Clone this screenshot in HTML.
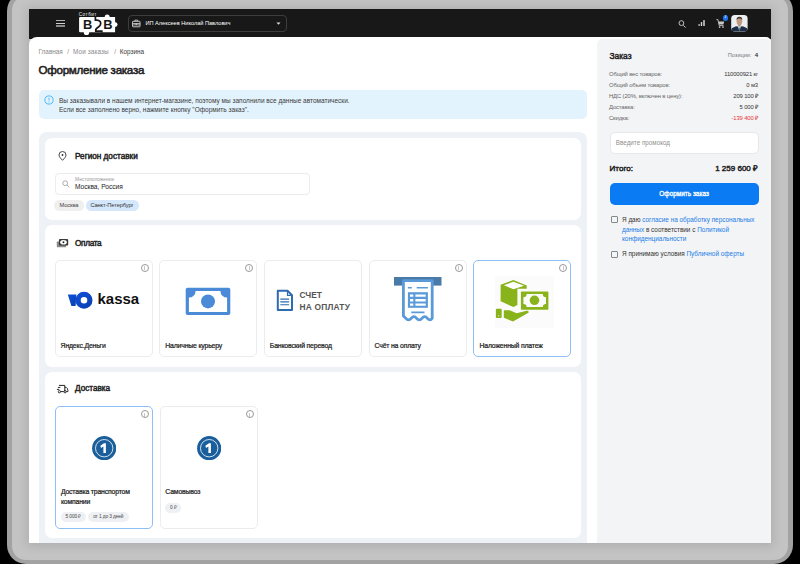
<!DOCTYPE html>
<html><head><meta charset="utf-8">
<style>
*{box-sizing:border-box;margin:0;padding:0}
html,body{width:800px;height:564px;overflow:hidden}
body{position:relative;background:#000;font-family:"Liberation Sans",sans-serif;color:#222}
.a{position:absolute}
.t{position:absolute;white-space:nowrap;line-height:1}
#ring{left:7px;top:-8px;width:786px;height:571.5px;border-radius:19px;background:#a2a2a2}
#gray{left:11.5px;top:-4px;width:776px;height:564px;border-radius:14px;background:#c3c3c3}
#shd{left:29px;top:9px;width:742px;height:534px;box-shadow:0 1px 9px 2px rgba(0,0,0,0.11)}
#hdr{left:29px;top:9px;width:742px;height:30px;background:#181818}
#main{left:29px;top:37.4px;width:742px;height:505.6px;background:#fff;border-radius:8px 5px 0 0}
#side{left:597px;top:38.9px;width:174px;height:504.1px;background:#f3f4f6;border-radius:5px 5px 0 0}
#panel{left:39px;top:132px;width:548px;height:411px;background:#eef1f5;border-radius:8px 8px 0 0}
.card{position:absolute;left:6px;width:536px;background:#fff;border-radius:7px}
.tile{position:absolute;width:98px;border:1px solid #ebecef;border-radius:5px;background:#fff}
.tile.sel{border-color:#8cc0f4}
.ii{position:absolute;right:3px;top:2.6px;width:8px;height:8px;border:0.9px solid #9a9a9a;border-radius:50%}.ii:after{content:"";position:absolute;left:2.65px;top:2.9px;width:0.85px;height:2.5px;background:#c4c4c4}.ii:before{content:"";position:absolute;left:2.65px;top:1.6px;width:0.85px;height:0.8px;background:#d0d0d0}
.med{color:#222;-webkit-text-stroke:0.45px #222}
.lbl{font-size:6.9px;font-weight:400;color:#222;letter-spacing:-0.18px;-webkit-text-stroke:0.22px #222}
.chip{position:absolute;height:10.5px;border-radius:5.25px;background:#eef0f3;font-size:5.7px;color:#444;line-height:10.5px;text-align:center;letter-spacing:-0.1px}
.row{position:absolute;left:12px;width:149px;font-size:5.9px;letter-spacing:-0.14px;color:#666;line-height:1}
.row span{position:absolute;right:0;top:0;color:#333}
</style></head><body>
<div class="a" id="ring"></div><div class="a" id="gray"></div><div class="a" id="shd"></div>
<div class="a" id="hdr"></div>
<div class="a" id="main"></div>
<div class="a" id="side"></div>

<!-- header content -->
<div class="a" style="left:56px;top:20px;width:9px;height:1.3px;background:#b0b0b0"></div>
<div class="a" style="left:56px;top:23px;width:9px;height:1px;background:#d0d0d0"></div>
<div class="a" style="left:56px;top:25.1px;width:9px;height:1.7px;background:#8a8a8a"></div>
<div class="t" style="left:78.8px;top:13.3px;font-size:4.6px;color:#eee;letter-spacing:0.5px">Сотбит</div>
<svg class="a" style="left:76px;top:9px" width="45" height="28" viewBox="0 0 45 28">
 <path d="M4.1 7.9H39.1V23.2H4.1A1 1 0 0 1 3.1 22.2V8.9A1 1 0 0 1 4.1 7.9Z" fill="#fff"/>
 <circle cx="10.5" cy="23.4" r="2.7" fill="#fff"/>
 <circle cx="31.2" cy="7.9" r="2.5" fill="#fff"/>
 <circle cx="39.1" cy="15.6" r="2.4" fill="#fff"/>
 <path d="M19.4 7.6V11H20.5C24 11 25.5 13.5 24.3 16C23.5 17.8 21 18.5 19.8 20.5V22H25.8V23.4" fill="none" stroke="#181818" stroke-width="1.75"/>
 <text x="7" y="20.3" font-family="Liberation Sans" font-weight="700" font-size="12.9" fill="#181818">B</text>
 <text x="27.3" y="20.3" font-family="Liberation Sans" font-weight="700" font-size="12.9" fill="#181818">B</text>
</svg>
<div class="a" style="left:128px;top:15px;width:159px;height:17px;border:1px solid #3d3d3d;border-radius:4px"></div>
<svg class="a" style="left:132px;top:19px" width="9" height="9" viewBox="0 0 9 9"><rect x="0.45" y="2.3" width="7.6" height="5.5" rx="0.5" fill="none" stroke="#d4d4d4" stroke-width="0.9"/><path d="M2.9 2.3V1.1H5.6V2.3M0.5 4.5H8M0.5 5.9H8" stroke="#d4d4d4" stroke-width="0.8" fill="none"/><rect x="3.6" y="4.4" width="1.3" height="1.5" fill="#d4d4d4"/></svg>
<div class="t" style="left:145.5px;top:20.5px;font-size:5.6px;color:#fff">ИП Алексеев Николай Павлович</div>
<svg class="a" style="left:276px;top:22px" width="5" height="3" viewBox="0 0 5 3"><path d="M0.5 0.5H4.5L2.5 2.8Z" fill="#ddd"/></svg>
<svg class="a" style="left:678.4px;top:19.6px" width="9" height="9" viewBox="0 0 9 9"><circle cx="3.4" cy="3.1" r="2.4" fill="none" stroke="#c8c8c8" stroke-width="0.95"/><path d="M5.3 5.3L7.6 7.6" stroke="#c8c8c8" stroke-width="1"/></svg>
<svg class="a" style="left:698px;top:20px" width="8" height="7" viewBox="0 0 8 7"><rect x="0.5" y="4" width="1.3" height="2.1" rx="0.5" fill="#c8c8c8"/><rect x="2.8" y="2.1" width="1.4" height="4" rx="0.5" fill="#d4d4d4"/><rect x="5.1" y="0" width="1.8" height="6.1" rx="0.5" fill="#b8b8b8"/></svg>
<svg class="a" style="left:715.5px;top:18.5px" width="10" height="10" viewBox="0 0 10 10"><path d="M0.4 0.6H1.9L3.2 6.6H7.6" fill="none" stroke="#c8c8c8" stroke-width="0.9"/><path d="M2.4 2.4H8.2L7.4 5.6H3.1Z" fill="#c8c8c8"/><circle cx="3.6" cy="8.1" r="0.85" fill="#c8c8c8"/><circle cx="7" cy="8.1" r="0.85" fill="#c8c8c8"/></svg>
<div class="a" style="left:722.7px;top:15px;width:5.6px;height:5.6px;border-radius:50%;background:#1c74ee"></div><div class="t" style="left:724.6px;top:16.3px;font-size:3px;color:#fff">4</div>
<svg class="a" style="left:731px;top:15px" width="17" height="16.5" viewBox="0 0 17 16.5">
 <defs><clipPath id="av"><rect x="0.2" y="0" width="16.4" height="16.4" rx="3.5"/></clipPath></defs>
 <g clip-path="url(#av)">
 <rect x="0" y="0" width="17" height="17" fill="#eceeef"/>
 <path d="M0 16.5V14.3C1.5 12.3 4 11.6 6 11.2L8.4 12.2L10.8 11.2C12.8 11.6 15.3 12.3 17 14.3V16.5Z" fill="#1c2d48"/>
 <path d="M7 11.2L8.4 16.5L9.8 11.2Z" fill="#e8ecee"/>
 <path d="M8.1 12.5H8.8L9 16.5H7.9Z" fill="#4d6b74"/>
 <ellipse cx="8.4" cy="6.2" rx="2.8" ry="3.9" fill="#c29a82"/>
 <path d="M5.6 5.5C5.3 2.6 6.6 1.7 8.4 1.7C10.3 1.7 11.5 2.6 11.2 5.5C10.8 3.8 10 3.4 8.4 3.4C6.8 3.4 6 3.8 5.6 5.5Z" fill="#3b302b"/>
 <rect x="7.2" y="9.5" width="2.4" height="2" fill="#b38d77"/>
 </g>
</svg>

<!-- main content -->
<div class="t" style="left:38.5px;top:49.3px;font-size:6.4px;color:#8a8a8a">Главная</div>
<div class="t" style="left:67.3px;top:49.3px;font-size:6.4px;color:#8a8a8a">/</div>
<div class="t" style="left:73px;top:49.3px;font-size:6.4px;color:#8a8a8a;letter-spacing:0.1px">Мои заказы</div>
<div class="t" style="left:114.2px;top:49.3px;font-size:6.4px;color:#8a8a8a">/</div>
<div class="t" style="left:119.7px;top:49.3px;font-size:6.4px;color:#3a3a3a">Корзина</div>
<div class="t med" style="left:38.5px;top:64.1px;font-size:11.6px;letter-spacing:-0.28px;-webkit-text-stroke:0.55px #222">Оформление заказа</div>

<div class="a" style="left:39px;top:90px;width:548px;height:29px;background:#e3f3fd;border-radius:5px"></div>
<svg class="a" style="left:43.8px;top:95.2px" width="10" height="10" viewBox="0 0 10 10"><circle cx="5" cy="5" r="4.1" fill="none" stroke="#38adf4" stroke-width="0.85"/><path d="M5 2.7V5.5" stroke="#38adf4" stroke-width="0.8"/><circle cx="5" cy="7" r="0.5" fill="#38adf4"/></svg>
<div class="t" style="left:59px;top:96.1px;font-size:6.5px;color:#3a3a3a;line-height:9px">Вы заказывали в нашем интернет-магазине, поэтому мы заполнили все данные автоматически.<br>Если все заполнено верно, нажмите кнопку "Оформить заказ".</div>

<div class="a" id="panel">
 <!-- region card -->
 <div class="card" style="top:6px;height:82px">
  <svg class="a" style="left:13px;top:13px" width="9" height="10" viewBox="0 0 9 10"><path d="M4.5 9.3C2.5 7.3 1 5.6 1 4A3.5 3.5 0 0 1 8 4C8 5.6 6.5 7.3 4.5 9.3Z" fill="none" stroke="#333" stroke-width="0.9"/><circle cx="4.5" cy="4" r="0.9" fill="#333"/></svg>
  <div class="t med" style="left:30px;top:14.6px;font-size:8.2px">Регион доставки</div>
  <div class="a" style="left:9.5px;top:35px;width:255px;height:21.5px;border:1px solid #ebeced;border-radius:4px"></div>
  <svg class="a" style="left:16.5px;top:41.5px" width="8" height="8" viewBox="0 0 8 8"><circle cx="3.2" cy="3.2" r="2.4" fill="none" stroke="#999" stroke-width="0.8"/><path d="M5 5L7.4 7.4" stroke="#999" stroke-width="0.8"/></svg>
  <div class="t" style="left:30px;top:39.6px;font-size:4.9px;color:#999">Местоположение</div>
  <div class="t" style="left:30px;top:45.5px;font-size:6.6px;color:#222">Москва, Россия</div>
  <div class="chip" style="left:9.2px;top:62px;width:29.6px;background:#efeff0">Москва</div>
  <div class="chip" style="left:40.5px;top:62px;width:53px;background:#d5e8fb;color:#333">Санкт-Петербург</div>
 </div>
 <!-- payment card -->
 <div class="card" style="top:92.5px;height:142.5px">
  <svg class="a" style="left:11px;top:13px" width="13" height="10" viewBox="0 0 13 10">
 <rect x="0.8" y="3.4" width="9.4" height="5.9" rx="0.9" fill="#8a8a8a"/>
 <rect x="2.9" y="0.9" width="9.3" height="6.7" rx="1.2" fill="#3a3a3a"/>
 <ellipse cx="7.5" cy="4.25" rx="3.3" ry="2.3" fill="#fff"/>
 <circle cx="7.5" cy="4.25" r="0.95" fill="#222"/>
</svg>
  <div class="t med" style="left:30px;top:15.4px;font-size:8.2px;letter-spacing:-0.3px">Оплата</div>
 </div>
 <!-- delivery card -->
 <div class="card" style="top:240px;height:166px">
  <svg class="a" style="left:11px;top:11px" width="13" height="11" viewBox="0 0 13 11">
 <path d="M3 2.4H8.8V8.4M8.8 4.3H10.1Q11.9 5.5 11.9 7.5V8.6H10.3M7.8 8.6H4.6" fill="none" stroke="#222" stroke-width="1"/>
 <circle cx="3.4" cy="8.7" r="1.15" fill="none" stroke="#222" stroke-width="0.95"/>
 <circle cx="9.1" cy="8.7" r="1.15" fill="none" stroke="#222" stroke-width="0.95"/>
 <path d="M1.9 4.4H4.4M0.9 6.4H3.3" stroke="#222" stroke-width="0.95"/>
</svg>
  <div class="t med" style="left:30px;top:13.3px;font-size:8.2px">Доставка</div>
 </div>
</div>


<!-- payment tiles -->
<div class="tile" style="left:54.5px;top:260px;height:97px"><div class="ii"></div></div>
<div class="tile" style="left:159.25px;top:260px;height:97px"><div class="ii"></div></div>
<div class="tile" style="left:264px;top:260px;height:97px"></div>
<div class="tile" style="left:368.75px;top:260px;height:97px"><div class="ii"></div></div>
<div class="tile sel" style="left:473.2px;top:260px;height:97px"><div class="ii"></div></div>
<div class="t lbl" style="left:60.6px;top:342.9px">Яндекс.Деньги</div>
<div class="t lbl" style="left:165.3px;top:342.9px">Наличные курьеру</div>
<div class="t lbl" style="left:269.8px;top:342.9px">Банковский перевод</div>
<div class="t lbl" style="left:374.5px;top:342.9px">Счёт на оплату</div>
<div class="t lbl" style="left:479.5px;top:342.9px">Наложенный платеж</div>
<!-- kassa -->
<svg class="a" style="left:67px;top:290.5px" width="26" height="18" viewBox="0 0 26 18">
 <defs><linearGradient id="kg" x1="0" y1="0" x2="1" y2="1"><stop offset="0" stop-color="#1050d8"/><stop offset="1" stop-color="#0a3fb0"/></linearGradient></defs>
 <path d="M0.8 3.5H9.4L8.6 15.1H4.4Z" fill="url(#kg)"/>
 <path fill-rule="evenodd" d="M17 0.8A8.5 8.5 0 1 1 17 17.8A8.5 8.5 0 1 1 17 0.8ZM17 6A3.3 3.3 0 1 0 17 12.6A3.3 3.3 0 1 0 17 6Z" fill="url(#kg)"/>
</svg>
<div class="t" style="left:97.5px;top:290.5px;font-size:15px;font-weight:700;color:#111">kassa</div>
<!-- cash -->
<svg class="a" style="left:185px;top:287px" width="46" height="29" viewBox="0 0 46 29">
 <path fill-rule="evenodd" fill="#4b8ad6" d="M2.5 0.7H43.5A1.8 1.8 0 0 1 45.3 2.5V26.3A1.8 1.8 0 0 1 43.5 28.1H2.5A1.8 1.8 0 0 1 0.7 26.3V2.5A1.8 1.8 0 0 1 2.5 0.7Z M3.9 3.9V24.9H42.1V3.9H35.4A6.7 6.7 0 0 0 42.1 10.6V3.9ZM3.9 10.6A6.7 6.7 0 0 0 10.6 3.9H3.9Z"/>
 <circle cx="23" cy="14.4" r="7" fill="#4b8ad6"/>
</svg>
<!-- doc -->
<svg class="a" style="left:276px;top:289px" width="18" height="23" viewBox="0 0 18 23">
 <path d="M1.8 1.8H11.5L16 6.3V20.9H1.8Z" fill="none" stroke="#2f6bb0" stroke-width="2" stroke-linejoin="round"/>
 <path d="M11.5 1.8V6.3H16" fill="none" stroke="#2f6bb0" stroke-width="1.2"/>
 <path d="M4.3 10.1H13.1M4.3 12.9H13.1M4.3 15.7H13.1" stroke="#2f6bb0" stroke-width="1.1"/>
</svg>
<div class="t" style="left:299.5px;top:290px;font-size:8.4px;font-weight:700;color:#555;line-height:11.5px">СЧЕТ<br><span style="letter-spacing:0.2px">НА ОПЛАТУ</span></div>
<!-- receipt -->
<svg class="a" style="left:393px;top:276px" width="50" height="46" viewBox="0 0 50 46">
 <rect x="1" y="1" width="47.5" height="8.6" fill="#4a7aa8"/>
 <path d="M10.4 4.7H39.2V42.3C37.8 44.5 36.2 44.5 34.4 42.3C32.6 40.1 30.8 40.1 29 42.3C27.2 44.5 25.4 44.5 23.6 42.3C21.8 40.1 20 40.1 18.2 42.3C16.4 44.5 14.6 44.5 12.8 42.3L10.4 40Z" fill="#fff" stroke="#5a9ad8" stroke-width="2.8" stroke-linejoin="round"/>
 <path d="M14.9 11.7H18.8M23.7 11.7H34.9M18.3 36.4H31.5" stroke="#5a9ad8" stroke-width="1.6"/>
 <rect x="14.9" y="16.2" width="20" height="15.6" fill="#5a9ad8"/>
 <path d="M17 19.6H20.3M22.4 19.6H32.7M17 24.2H20.3M22.4 24.2H32.7M17 28.6H20.3M22.4 28.6H32.7" stroke="#fff" stroke-width="2.4"/>
</svg>
<!-- green -->
<div class="a" style="left:495px;top:276px;width:59px;height:52px;background:#fbfbfb"></div>
<svg class="a" style="left:495px;top:278px" width="56" height="46" viewBox="0 0 56 46">
 <path d="M5.6 6.8L18.4 2L31.7 7.6V10.8H22.4V27L18.4 29.1L5.6 23.3Z" fill="#89b31b"/>
 <path d="M8.8 7.3L18.4 3.8L29 7.8L18.4 11.2Z" fill="#fff"/>
 <path fill-rule="evenodd" fill="#89b31b" d="M26.7 13.4H52.6A0.8 0.8 0 0 1 53.4 14.2V31A0.8 0.8 0 0 1 52.6 31.8H26.7A0.8 0.8 0 0 1 25.9 31V14.2A0.8 0.8 0 0 1 26.7 13.4Z M31.6 16.1H47.8A3.2 3.2 0 0 0 51 19.3V25.9A3.2 3.2 0 0 0 47.8 29.1H31.6A3.2 3.2 0 0 0 28.4 25.9V19.3A3.2 3.2 0 0 0 31.6 16.1Z"/>
 <circle cx="39.5" cy="22.3" r="4.8" fill="#89b31b"/>
 <rect x="0.9" y="30.7" width="5.8" height="9.3" rx="1" fill="#89b31b"/>
 <circle cx="3.7" cy="37.8" r="0.6" fill="#fff"/>
 <path d="M8.8 32.3H14.7L21.6 35.3L31.7 32.8C33 32.3 34.3 33.8 33.4 34.8L21.6 41.6L17.9 43.5L8.8 39.7Z" fill="#89b31b"/>
</svg>

<!-- delivery tiles -->
<div class="tile sel" style="left:54.5px;top:406px;height:122.5px"><div class="ii" style="top:3.4px"></div></div>
<div class="tile" style="left:159.5px;top:406px;height:122.5px"><div class="ii" style="top:3.4px"></div></div>
<svg class="a" style="left:92px;top:435.7px" width="24.4" height="24.4" viewBox="0 0 24.4 24.4"><circle cx="12.2" cy="12.2" r="12.1" fill="#1a5f9c"/><circle cx="12.2" cy="12.2" r="8.7" fill="none" stroke="#fff" stroke-width="0.8"/><path d="M8.4 9.7L11.9 7.2H13.9V17.1H11.4V10.4L9 11.9Z" fill="#fff"/></svg>
<svg class="a" style="left:196.6px;top:435.7px" width="24.4" height="24.4" viewBox="0 0 24.4 24.4"><circle cx="12.2" cy="12.2" r="12.1" fill="#1a5f9c"/><circle cx="12.2" cy="12.2" r="8.7" fill="none" stroke="#fff" stroke-width="0.8"/><path d="M8.4 9.7L11.9 7.2H13.9V17.1H11.4V10.4L9 11.9Z" fill="#fff"/></svg>
<div class="t lbl" style="left:60.9px;top:487.3px;line-height:9.6px">Доставка транспортом<br>компании</div>
<div class="chip" style="left:60.9px;top:511.7px;width:25px;font-size:4.8px">5 000 ₽</div>
<div class="chip" style="left:88px;top:511.7px;width:40.6px;font-size:4.8px">от 1 до 3 дней</div>
<div class="t lbl" style="left:165.3px;top:489.4px">Самовывоз</div>
<div class="chip" style="left:165.3px;top:502.5px;width:16.2px;font-size:4.8px">0 ₽</div>

<!-- sidebar -->
<div class="t med" style="left:609.5px;top:52px;font-size:8.4px">Заказ</div>
<div class="t" style="left:700px;top:52px;width:58px;text-align:right;font-size:5.6px;color:#777">Позиции: &nbsp;<b style="color:#333;font-size:6px">4</b></div>
<div class="a" style="left:597px;top:0">
 <div class="row" style="top:71.6px">Общий вес товаров:<span>110000921 кг</span></div>
 <div class="row" style="top:83.2px">Общий объем товаров:<span>0 м3</span></div>
 <div class="row" style="top:94px">НДС (20%, включен в цену):<span>209 100 ₽</span></div>
 <div class="row" style="top:104.8px">Доставка:<span>5 000 ₽</span></div>
 <div class="row" style="top:115.5px">Скидка:<span style="color:#e8333b">-139 400 ₽</span></div>
</div>
<div class="a" style="left:609.5px;top:131.5px;width:149px;height:22px;background:#fff;border:1px solid #e6e8eb;border-radius:5px"></div>
<div class="t" style="left:615.8px;top:139.9px;font-size:6.3px;color:#8f8f8f">Введите промокод</div>
<div class="t med" style="left:609.5px;top:165.3px;font-size:8.1px">Итого:</div>
<div class="t med" style="left:680px;top:165.3px;width:78px;text-align:right;font-size:8px">1 259 600 ₽</div>
<div class="a" style="left:609.6px;top:183px;width:149px;height:22px;background:#0b7bf4;border-radius:5px;color:#fff;font-size:6.45px;font-weight:400;-webkit-text-stroke:0.3px #fff;text-align:center;line-height:22px">Оформить заказ</div>
<div class="a" style="left:611px;top:216px;width:7px;height:6.5px;border:0.9px solid #888;border-radius:1px"></div>
<div class="t" style="left:622px;top:215px;font-size:6.4px;color:#333;line-height:9.6px">Я даю <span style="color:#1a7ce8">согласие на обработку персональных</span><br><span style="color:#1a7ce8">данных</span> в соответствии с <span style="color:#1a7ce8">Политикой</span><br><span style="color:#1a7ce8">конфиденциальности</span></div>
<div class="a" style="left:611px;top:251px;width:7px;height:6.5px;border:0.9px solid #888;border-radius:1px"></div>
<div class="t" style="left:622px;top:251px;font-size:6.4px;color:#333">Я принимаю условия <span style="color:#1a7ce8">Публичной оферты</span></div>

</body></html>
